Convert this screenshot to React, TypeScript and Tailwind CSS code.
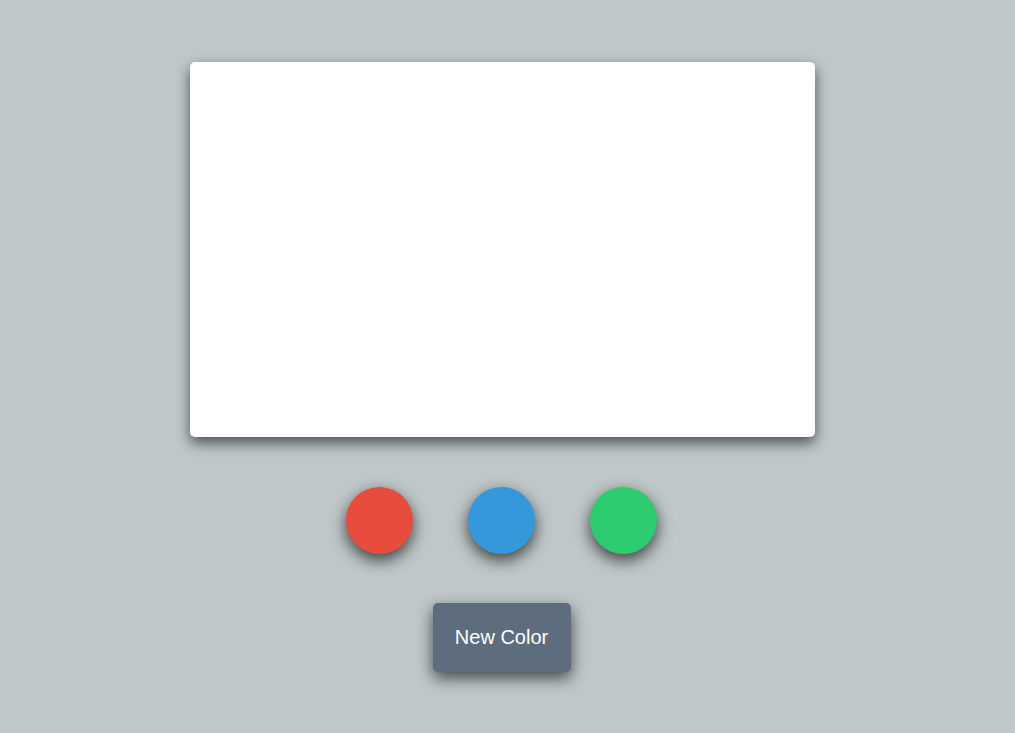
export default function App() {
  return (
    <div
      className="w-full h-[733px] bg-[#bfc7c8] flex flex-col items-center pt-[62px] pr-[10px]"
      style={{ fontFamily: '"Liberation Sans", Arial, sans-serif' }}
    >
      <div className="w-[625px] h-[375px] bg-white rounded-[5px] shadow-[0_6px_14px_rgba(0,0,0,0.6)]" />
      <div className="flex gap-[55px] mt-[50px] pr-[2px]">
        <div className="w-[67px] h-[67px] rounded-full bg-[#e74c3c] shadow-[0_6px_16px_rgba(0,0,0,0.7)]" />
        <div className="w-[67px] h-[67px] rounded-full bg-[#3498db] shadow-[0_6px_16px_rgba(0,0,0,0.7)]" />
        <div className="w-[67px] h-[67px] rounded-full bg-[#2ecc71] shadow-[0_6px_16px_rgba(0,0,0,0.7)]" />
      </div>
      <button className="mt-[49px] mr-[2px] w-[138px] h-[69px] rounded-[5px] bg-[#5d6d7e] text-white text-[20px] leading-none pb-[2px] shadow-[0_6px_16px_rgba(0,0,0,0.65)]">
        New Color
      </button>
    </div>
  );
}
